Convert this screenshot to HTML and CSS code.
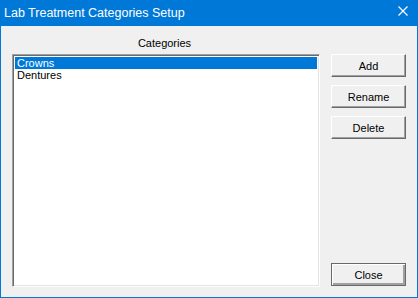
FILE: index.html
```html
<!DOCTYPE html>
<html lang="en">
<head>
  <meta charset="UTF-8" />
  <title>Lab Treatment Categories Setup</title>
  <link rel="stylesheet" href="styles.css">
</head>
<body>
  <div class="window">
    <div class="titlebar">
      <span class="title">Lab Treatment Categories Setup</span>
      <svg class="close-x" width="10" height="10" viewBox="0 0 10 10">
        <path d="M0.5 0.5 L9.5 9.5 M9.5 0.5 L0.5 9.5" stroke="#fff" stroke-width="1.2" fill="none"/>
      </svg>
    </div>

    <div class="content">
      <div class="left">
        <div class="label">Categories</div>
        <div class="listbox">
          <div class="item selected">Crowns</div>
          <div class="item">Dentures</div>
        </div>
      </div>

      <div class="right">
        <button class="btn">Add</button>
        <button class="btn">Rename</button>
        <button class="btn">Delete</button>
        <button class="btn default">Close</button>
      </div>
    </div>
  </div>
</body>
</html>
```

FILE: styles.css
```css
body {
  margin: 0;
  font-family: 'Liberation Sans', Arial, sans-serif;
  font-size: 11px;
  color: #000;
}

.window {
  width: 418px;
  height: 298px;
  box-sizing: border-box;
  border: 1px solid #0078d7;
  border-top: none;
  background: #f0f0f0;
  display: flex;
  flex-direction: column;
}

.titlebar {
  height: 26px;
  background: #0078d7;
  color: #fff;
  display: flex;
  align-items: center;
  padding: 0 10px 0 4px;
  margin: 0 -1px;
}

.title {
  font-family: 'Liberation Sans', Arial, sans-serif;
  font-size: 12.5px;
  flex: 1;
  padding-bottom: 1px;
}

.close-x {
  display: block;
  margin-top: -4px;
}

.content {
  flex: 1;
  display: flex;
  gap: 11px;
  padding: 10px 10px 10px 11px;
}

.left {
  width: 308px;
  display: flex;
  flex-direction: column;
}

.label {
  text-align: center;
  line-height: 14px;
  margin-bottom: 4px;
  padding-right: 3px;
}

.listbox {
  flex: 1;
  background: #fff;
  border: 1px solid;
  border-color: #a0a0a0 #fff #fff #a0a0a0;
  box-shadow: inset 1px 1px 0 #696969, inset -1px -1px 0 #e3e3e3;
  padding: 2px 2px;
}

.item {
  height: 12px;
  line-height: 12px;
  padding-left: 2px;
}

.item.selected {
  background: #0078d7;
  color: #fff;
}

.right {
  width: 75px;
  display: flex;
  flex-direction: column;
  padding-top: 18px;
  padding-bottom: 1px;
}

.btn {
  height: 23px;
  margin-bottom: 8px;
  padding: 0;
  font-family: 'Liberation Sans', Arial, sans-serif;
  font-size: 11px;
  color: #000;
  background: #f0f0f0;
  border: 1px solid;
  border-color: #fff #696969 #696969 #fff;
  box-shadow: inset -1px -1px 0 #a0a0a0;
}

.btn.default {
  margin-top: auto;
  margin-bottom: 0;
  border: 1px solid #696969;
  box-shadow: inset 1px 1px 0 #fff, inset -2px -2px 0 #a0a0a0;
}
```
